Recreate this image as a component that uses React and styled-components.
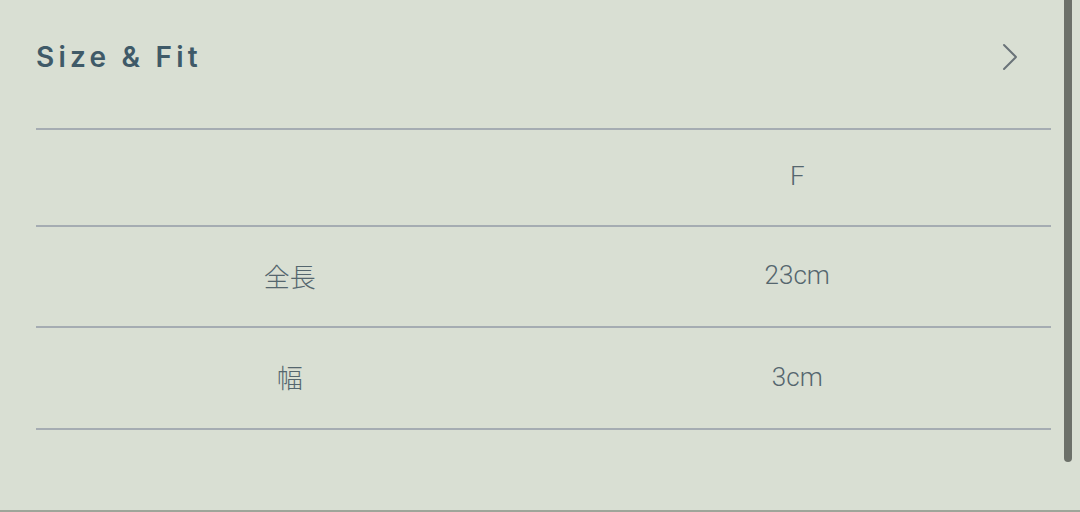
import React from "react"
import styled, { createGlobalStyle } from "styled-components"

const GlobalStyle = createGlobalStyle`
  html, body {
    margin: 0;
    padding: 0;
    background: #d9dfd3;
  }
  body {
    font-family: Roboto, "Noto Sans CJK JP", sans-serif;
  }
`

const Page = styled.div`
  position: relative;
  width: 1080px;
  height: 512px;
  box-sizing: border-box;
  background: #d9dfd3;
  border-bottom: 2px solid #9fa59a;
  overflow: hidden;
`

const Panel = styled.section`
  padding: 0 29px 0 36px;
`

const Header = styled.div`
  height: 130px;
  display: flex;
  align-items: center;
  justify-content: space-between;
  border-bottom: 2px solid #a5acb2;
  padding-bottom: 14px;
  box-sizing: border-box;
`

const Title = styled.h2`
  margin: 0;
  font-family: Inter, sans-serif;
  font-size: 28px;
  font-weight: 600;
  letter-spacing: 4.2px;
  color: #3f5a68;
`

const Chevron = styled.svg`
  width: 18px;
  height: 28px;
  margin-right: 32px;
  color: #6a7378;
`

const Table = styled.div`
  display: grid;
  grid-template-columns: 1fr 1fr;
`

const Cell = styled.div`
  height: ${p => p.$h}px;
  display: flex;
  align-items: center;
  justify-content: center;
  border-bottom: 2px solid #a5acb2;
  font-family: Roboto, "Noto Sans CJK JP", sans-serif;
  font-size: 26px;
  font-weight: 300;
  color: #55666e;
  box-sizing: border-box;
  padding-bottom: 3px;
`

const Scrollbar = styled.div`
  position: absolute;
  top: -6px;
  right: 8px;
  width: 8px;
  height: 468px;
  border-radius: 4px;
  background: #6c7069;
`

const rows = [
  { label: "", value: "F", h: 97 },
  { label: "全長", value: "23cm", h: 101 },
  { label: "幅", value: "3cm", h: 102 },
]

export default function App() {
  return (
    <Page>
      <GlobalStyle />
      <Panel>
        <Header>
          <Title>Size &amp; Fit</Title>
          <Chevron viewBox="0 0 18 28" fill="none">
            <path d="M3 2 L15 14 L3 26" stroke="currentColor" strokeWidth="2" strokeLinecap="round" strokeLinejoin="round" />
          </Chevron>
        </Header>
        <Table>
          {rows.map((r, i) => (
            <React.Fragment key={i}>
              <Cell $h={r.h}>{r.label}</Cell>
              <Cell $h={r.h}>{r.value}</Cell>
            </React.Fragment>
          ))}
        </Table>
      </Panel>
      <Scrollbar />
    </Page>
  )
}
